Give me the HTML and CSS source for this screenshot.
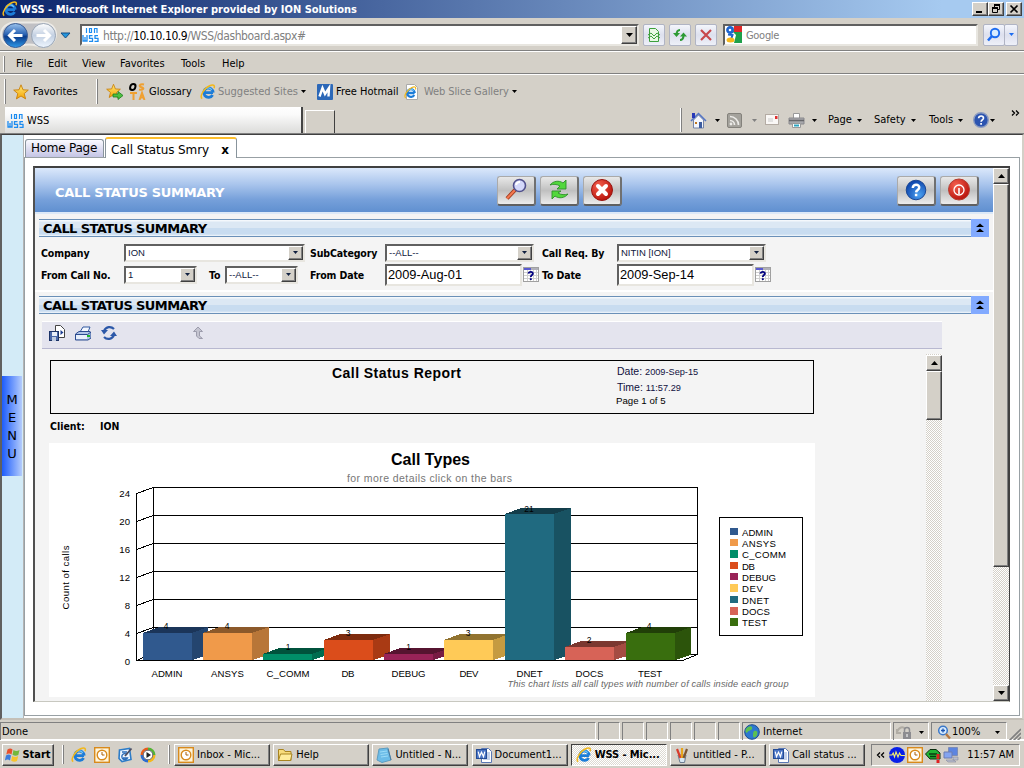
FILE: index.html
```html
<!DOCTYPE html>
<html lang="en">
<head>
<meta charset="utf-8">
<title>WSS - Microsoft Internet Explorer provided by ION Solutions</title>
<link rel="stylesheet" href="styles.css">
</head>
<body>
<svg class="defs" width="0" height="0">
  <defs>
    <linearGradient id="blueBall" x1="0" y1="0" x2="0" y2="1"><stop offset="0" stop-color="#9cc4ee"/><stop offset=".45" stop-color="#2a63b4"/><stop offset=".55" stop-color="#0a3c8c"/><stop offset="1" stop-color="#2f9bea"/></linearGradient>
    <linearGradient id="paleBall" x1="0" y1="0" x2="0" y2="1"><stop offset="0" stop-color="#fff"/><stop offset=".5" stop-color="#c3d0e2"/><stop offset="1" stop-color="#eef6ff"/></linearGradient>
    <linearGradient id="starFill" x1="0" y1="0" x2="0" y2="1"><stop offset="0" stop-color="#ffe97a"/><stop offset="1" stop-color="#f5a400"/></linearGradient>
    <radialGradient id="redBall" cx=".35" cy=".3" r=".8"><stop offset="0" stop-color="#f4604e"/><stop offset="1" stop-color="#b30c06"/></radialGradient>
    <radialGradient id="helpBall" cx=".65" cy=".75" r=".8"><stop offset="0" stop-color="#4aa0f0"/><stop offset="1" stop-color="#0a3fa8"/></radialGradient>
  </defs>
  <symbol id="ie" viewBox="0 0 16 16">
    <path d="M3.400 8.600h9.600M12.600 11A4.700 4.700 0 1 1 13.200 8.600" fill="none" stroke="#1c7cd8" stroke-width="2.800"/>
    <path d="M4.200 6.600A4.200 4.200 0 0 1 11.800 6" fill="none" stroke="#6cc4f8" stroke-width="1.300"/>
    <path d="M2.200 14.600C-.8 12.800 3.800 4.400 9.600 1.800c3.200-1.400 5.800-.8 4.400 2.400" fill="none" stroke="#f2b81c" stroke-width="1.500"/>
  </symbol>
  <symbol id="star" viewBox="0 0 16 16">
    <path d="M8 .8l2 5 5.300.3-4.100 3.500 1.400 5.300L8 12l-4.600 2.900 1.400-5.300L.7 6.100 6 5.800z" fill="url(#starFill)" stroke="#c87f0a" stroke-width=".9"/>
  </symbol>
  <symbol id="down" viewBox="0 0 5 3"><path d="M0 0h5L2.500 3z" fill="currentColor"/></symbol>
  <symbol id="clock" viewBox="0 0 16 16">
    <rect x=".7" y=".7" width="14.600" height="14.600" fill="#fff6dc" stroke="#d88a1c" stroke-width="1.400"/>
    <circle cx="8" cy="8" r="4.800" fill="#fff" stroke="#d88a1c" stroke-width="1.400"/>
    <path d="M8 5v3h2.500" fill="none" stroke="#a86008" stroke-width="1"/>
  </symbol>
  <symbol id="word" viewBox="0 0 16 16">
    <path d="M5.500 1.500h7l3 3v11h-10z" fill="#fff" stroke="#5a78b4"/>
    <path d="M9 6h5M9 8h5M7 10h7M7 12h7" stroke="#8aa4d6"/>
    <rect x=".5" y="2.500" width="10" height="9" fill="#4a74c4" stroke="#234a94"/>
    <path d="M2.200 4.600l1.300 5 2-4.400 2 4.400 1.300-5" fill="none" stroke="#fff" stroke-width="1.200"/>
  </symbol>
  <symbol id="calendar" viewBox="0 0 16 15">
    <rect x=".5" y=".5" width="15" height="14" fill="#fff" stroke="#a0a0a0"/>
    <path d="M1 5.500h14M1 8.500h14M1 11.500h14M4.500 3v11M7.500 3v11M10.500 3v11M13.500 3v11" stroke="#d0d0d0"/>
    <path d="M1 1h14v2H1z" fill="#b0b0b8"/><path d="M1 1h7v2H1z" fill="#5a5ad0"/>
    <path d="M5.500 6.700C5.800 4.200 10.200 4.200 9.800 6.800 9.500 8.200 7.800 8.200 7.800 10M7.800 11.200v1.900" fill="none" stroke="#000080" stroke-width="1.900"/>
  </symbol>
  <symbol id="chevrons" viewBox="0 0 18 18"><path d="M9 4.500l4 3.500H5zM9 9.500l4 3.500H5z" fill="#000"/></symbol>
  <symbol id="wssmark" viewBox="0 0 17 16">
    <path d="M4.500 1v5M7.500 1.500h2v4h-2zM12.500 6V1.500h2.500V6" fill="none" stroke="#1c8cf0" stroke-width="1.200"/>
    <path d="M1 8v6h4V8M3 10v4M10.500 8.700H7.500v2.600h3v3H7M16 8.700h-3v2.600h3v3h-3.500" fill="none" stroke="#1c8cf0" stroke-width="1.300"/>
  </symbol>
</svg>

<header class="titlebar">
  <svg class="i16"><use href="#ie"/></svg>
  <h1 class="title">WSS - Microsoft Internet Explorer provided by ION Solutions</h1>
  <div class="winbtns">
    <span class="raised wb"><svg width="12" height="10"><path d="M2 7h6v2H2z"/></svg></span>
    <span class="raised wb"><svg width="12" height="10"><path d="M4.500 3.500V1.500h5v4h-2" fill="none" stroke="#000"/><path d="M4 1h6M2 4h6" stroke="#000" stroke-width="2"/><path d="M2.500 4v4.500h5V4" fill="none" stroke="#000"/></svg></span>
    <span class="raised wb last"><svg width="12" height="10"><path d="M2.500 1.500l7 7m0-7l-7 7" stroke="#000" stroke-width="1.700"/></svg></span>
  </div>
</header>

<nav class="navbar">
  <svg class="travel" width="72" height="31" viewBox="0 0 72 31">
    <path d="M15 3.500h28c6 0 12 3 13 11 0 9-7 13-13 13-5 0-8-2-14-2s-8 2-14 2C6 27.500 1 22 1 15.500S7 3.500 15 3.500z" fill="#c0c0c4" stroke="#eceae6" stroke-width="2"/>
    <circle cx="15.500" cy="16.500" r="12" fill="url(#blueBall)" stroke="#3a5c94"/>
    <circle cx="43.500" cy="16.500" r="12" fill="url(#paleBall)" stroke="#98a4b4"/>
    <path d="M22.500 16.500H10M15 11l-5.500 5.500L15 22" fill="none" stroke="#fff" stroke-width="3"/>
    <path d="M36.500 16.500H49M44 11l5.500 5.500L44 22" fill="none" stroke="#fff" stroke-width="3"/>
    <path d="M61 14h9l-4.500 5z" fill="#2496dc" stroke="#174f86"/>
  </svg>
  <div class="field address">
    <svg width="17" height="16"><use href="#wssmark"/></svg>
    <span class="url">http://<b>10.10.10.9</b>/WSS/dashboard.aspx#</span>
    <span class="raised drop"><svg width="7" height="4" viewBox="0 0 7 4"><path d="M0 0h7L3.500 4z"/></svg></span>
  </div>
  <span class="softbtn"><svg class="i16" viewBox="0 0 16 16"><path d="M3.500 1.500h6l3 3v10h-9z" fill="#e8f8e4" stroke="#3ca03c"/><path d="M2 8l3-2 3 3 3-3 3 2M2 11l3-2 3 3 3-3 3 2" fill="none" stroke="#3ca03c"/></svg></span>
  <span class="softbtn"><svg class="i16" viewBox="0 0 16 16"><path d="M8 3c-2 0-3.500 1-3.500 5M8 13c2 0 3.500-1 3.500-5" fill="none" stroke="#2c9a34" stroke-width="2"/><path d="M1 6h7L4.500 10zM8 9.500h7l-3.500-4z" fill="#2c9a34"/></svg></span>
  <span class="softbtn"><svg class="i16" viewBox="0 0 16 16"><path d="M3 3l10 10M13 3L3 13" stroke="#c8484c" stroke-width="2.200"/></svg></span>
  <div class="field search">
    <svg width="17" height="17" viewBox="0 0 17 17"><path d="M7 0h10v17H7z" fill="#1fa04a"/><path d="M9 0h8v6H9z" fill="#e02828"/><path d="M0 0h9l-1 6 3 3-2 8H0z" fill="#fff"/><circle cx="5" cy="4" r="2.600" fill="none" stroke="#1c64d0" stroke-width="2.600"/><path d="M3 8.500l4.500.5-1 3" fill="none" stroke="#1c64d0" stroke-width="2"/><ellipse cx="5.500" cy="14" rx="4" ry="2.500" fill="#f6b81c"/></svg>
    <span>Google</span>
  </div>
  <span class="softbtn go"><svg class="i16" viewBox="0 0 16 16"><circle cx="9" cy="6" r="4.200" fill="#d8ecff" stroke="#1c6cf0" stroke-width="1.900"/><path d="M6 9l-4 4.500" stroke="#1c6cf0" stroke-width="2.600"/></svg></span>
  <span class="softbtn godrop"><svg width="5" height="3"><use href="#down"/></svg></span>
</nav>

<nav class="menubar">
  <span class="grip"></span><span>File</span><span>Edit</span><span>View</span><span>Favorites</span><span>Tools</span><span>Help</span>
</nav>

<div class="favbar">
  <span class="grip"></span>
  <svg class="i16"><use href="#star"/></svg><span>Favorites</span>
  <span class="grip tall"></span>
  <svg class="i17" viewBox="0 0 17 17"><use href="#star" width="15" height="16"/><path d="M7 11h5V8.500l5 4-5 4V14H7z" fill="#4cc040" stroke="#1c7c1c" stroke-width=".8"/></svg>
  <svg class="i17" viewBox="0 0 17 17"><ellipse cx="4.500" cy="4" rx="2.600" ry="3" transform="skewX(-10)" fill="none" stroke="#000" stroke-width="2"/><path d="M15 1.500c-4-1-6 2-2.500 2.700 3.500.8 1.500 3.300-2.500 2.400M1 10h7M4.500 10v7M10.500 17l2.500-7 2.500 7M11 14.500h4" fill="none" stroke="#f0a030" stroke-width="2"/></svg>
  <span>Glossary</span>
  <svg class="i16"><use href="#ie"/></svg><span class="dim">Suggested Sites</span>
  <svg class="arr" width="5" height="3"><use href="#down"/></svg>
  <svg class="i16" viewBox="0 0 16 16"><rect width="16" height="16" rx="1" fill="#2c68b8"/><path d="M2.500 12.500L5.500 4l2.500 6 4-6-.5 8.500" fill="none" stroke="#fff" stroke-width="2.400"/></svg>
  <span>Free Hotmail</span>
  <svg class="i16" viewBox="0 0 16 16"><path d="M2.500.5h8l3 3v12h-11z" fill="#fff" stroke="#aaa"/><use href="#ie" x="0" y="2" width="13" height="13"/></svg>
  <span class="dim slice">Web Slice Gallery</span>
  <svg class="arr" width="5" height="3"><use href="#down"/></svg>
</div>

<div class="tabsrow">
  <div class="btab"><svg width="17" height="16"><use href="#wssmark"/></svg><span>WSS</span></div>
  <div class="newtab"></div>
  <div class="cmds">
    <span class="grip"></span>
    <svg class="i17" viewBox="0 0 17 17"><path d="M3.500 8v8h10V8L8.500 3z" fill="#f4f6fc" stroke="#7484a8"/><path d="M1 9l7.500-7.500L16 9" fill="none" stroke="#5474c4" stroke-width="1.500"/><path d="M2 1h3v5H2z" fill="#2838b8"/><path d="M9 10h3v6H9z" fill="#3c5ca0"/><path d="M5 10h2v2H5z" fill="#c07820"/></svg>
    <svg class="arr" width="5" height="3"><use href="#down"/></svg>
    <svg class="i15" viewBox="0 0 15 15"><rect x=".5" y=".5" width="14" height="14" rx="1.500" fill="#a4a29c" stroke="#84827c"/><path d="M3 7.500a4.500 4.500 0 0 1 4.500 4.500M3 3.500a8.500 8.500 0 0 1 8.500 8.500" fill="none" stroke="#ecebe8" stroke-width="1.700"/><circle cx="4" cy="11" r="1.400" fill="#ecebe8"/></svg>
    <svg class="arr dim" width="5" height="3"><use href="#down"/></svg>
    <svg width="15" height="12" viewBox="0 0 15 12"><rect x=".5" y=".5" width="13" height="10" fill="#faf8f6" stroke="#b4aca4"/><rect x="10" y="2" width="2.500" height="3" fill="#e03030"/><path d="M3 5h5M3 7h5" stroke="#ccc"/></svg>
    <svg class="i17" viewBox="0 0 17 17"><path d="M5.500 1.500h6v5h-6z" fill="#fff" stroke="#999"/><path d="M1 6h15v6H1z" fill="#a8a8ac" stroke="#88888c"/><path d="M1 8.500h15" stroke="#66666a" stroke-width="1.500"/><path d="M4.500 11.500h8v4h-8z" fill="#fff" stroke="#999"/><path d="M6 13.500h5" stroke="#2ca4c0" stroke-width="2"/></svg>
    <svg class="arr" width="5" height="3"><use href="#down"/></svg>
    <span>Page</span><svg class="arr" width="5" height="3"><use href="#down"/></svg>
    <span>Safety</span><svg class="arr" width="5" height="3"><use href="#down"/></svg>
    <span>Tools</span><svg class="arr" width="5" height="3"><use href="#down"/></svg>
    <svg class="i16" viewBox="0 0 16 16"><circle cx="8" cy="8" r="7.300" fill="#2c54b0" stroke="#8c9cc0" stroke-width="1.400"/><path d="M5.600 6.200c.2-3.200 5.300-2.700 4.800.2C10 8 8.200 7.900 8.100 9.800M8.100 11v1.800" fill="none" stroke="#fff" stroke-width="1.700"/></svg>
    <svg class="arr" width="5" height="3"><use href="#down"/></svg>
    <svg class="more" width="9" height="6"><path d="M1 .5L3.500 3 1 5.500M5 .5L7.500 3 5 5.500" fill="none" stroke="#000" stroke-width="1.300"/></svg>
  </div>
</div>

<main class="viewport">
  <aside class="side"><div class="menu"><span>M</span><span>E</span><span>N</span><span>U</span></div></aside>
  <div class="page">
    <div class="ptabs">
      <div class="ptab">Home Page</div>
      <div class="ptab active"><span>Call Status Smry</span><b>x</b></div>
    </div>
    <div class="pbody">
      <div class="frame">
        <div class="doc">
          <div class="banner">
            <h2>CALL STATUS SUMMARY</h2>
            <div class="bgroup">
              <span class="metal"><svg width="26" height="26" viewBox="0 0 26 26"><path d="M12 13L4 21.500" stroke="#a03c20" stroke-width="4"/><path d="M12 13L4 21.500" stroke="#f47850" stroke-width="2"/><circle cx="16.500" cy="8.500" r="6" fill="#d4d8fa" stroke="#50508c" stroke-width="1.600"/><path d="M13 8a4 4 0 0 1 4-3" fill="none" stroke="#fff" stroke-width="2"/></svg></span>
              <span class="metal"><svg width="26" height="26" viewBox="0 0 26 26"><path d="M4 8c3-4 9-5 13-2l3-3v9h-9l3-3c-3-2-7-2-10-1zM22 17c-3 4-9 5-13 2l-3 3v-8h9l-3 2c3 2 7 2 10 1z" fill="#52d83c" stroke="#2c9028" stroke-width=".9"/></svg></span>
              <span class="metal"><svg width="26" height="26" viewBox="0 0 26 26"><circle cx="13" cy="13" r="10.500" fill="url(#redBall)" stroke="#981410"/><path d="M9 9l8 8M17 9l-8 8" stroke="#fff" stroke-width="4" stroke-linecap="round"/></svg></span>
            </div>
            <div class="bgroup right">
              <span class="metal"><svg width="26" height="26" viewBox="0 0 26 26"><circle cx="13" cy="13" r="9.800" fill="url(#helpBall)" stroke="#1c4894"/><path d="M9.800 11c0-4.600 7-4 6.400-.2-.4 2.400-3 2-3.100 4.600M13.100 16.800v2.400" fill="none" stroke="#fff" stroke-width="2.500"/></svg></span>
              <span class="metal"><svg width="26" height="26" viewBox="0 0 26 26"><circle cx="13" cy="12.500" r="10.500" fill="url(#redBall)" stroke="#b43c30"/><circle cx="13" cy="13" r="5" fill="none" stroke="#fff" stroke-width="1.300"/><path d="M13 11v6" stroke="#fff" stroke-width="1.600"/></svg></span>
            </div>
          </div>

          <section class="panel first">
            <div class="sechead"><h3>CALL STATUS SUMMARY</h3><svg width="18" height="18"><use href="#chevrons"/></svg></div>
            <div class="form">
              <label>Company</label>
              <div class="cell"><div class="field sel w181"><span>ION</span><i class="raised"><svg width="5" height="3"><use href="#down"/></svg></i></div></div>
              <label>SubCategory</label>
              <div class="cell"><div class="field sel w149"><span>--ALL--</span><i class="raised"><svg width="5" height="3"><use href="#down"/></svg></i></div></div>
              <label>Call Req. By</label>
              <div class="cell"><div class="field sel w149"><span>NITIN [ION]</span><i class="raised"><svg width="5" height="3"><use href="#down"/></svg></i></div></div>
              <label>From Call No.</label>
              <div class="cell"><div class="field sel w73"><span>1</span><i class="raised"><svg width="5" height="3"><use href="#down"/></svg></i></div><label class="to">To</label><div class="field sel w73"><span>--ALL--</span><i class="raised"><svg width="5" height="3"><use href="#down"/></svg></i></div></div>
              <label>From Date</label>
              <div class="cell"><div class="field date">2009-Aug-01</div><svg width="16" height="15"><use href="#calendar"/></svg></div>
              <label>To Date</label>
              <div class="cell"><div class="field date">2009-Sep-14</div><svg width="16" height="15"><use href="#calendar"/></svg></div>
            </div>
          </section>

          <section class="panel second">
            <div class="sechead"><h3>CALL STATUS SUMMARY</h3><svg width="18" height="18"><use href="#chevrons"/></svg></div>
            <div class="rtools">
              <svg class="i16" viewBox="0 0 16 16"><path d="M6.500.5h5l4 4v8h-9z" fill="#fff" stroke="#444"/><path d="M11.500 5l3 2.500-3 2.500z" fill="#1c3c90"/><rect x=".5" y="6.500" width="9" height="9" fill="#4a68a8" stroke="#1c3468"/><path d="M3 7h5v4H3z" fill="#e8eef8"/><path d="M3 12h4v4H3z" fill="#c0cce0"/></svg>
              <svg class="i16" viewBox="0 0 16 16"><path d="M5 7l3-5h7l-2 5z" fill="#f4f8ff" stroke="#3058a0"/><path d="M.5 9L4 6.500h11L16 8v5l-3 2H.5z" fill="#b0c4e8" stroke="#2c4c90"/><path d="M1 10h11v4H1z" fill="#e8f0fc"/><path d="M.5 9.500h12L16 7" fill="none" stroke="#2c4c90"/><rect x="12" y="10" width="3" height="2" fill="#1cb42c"/></svg>
              <svg class="i16" viewBox="0 0 16 16"><path d="M3 6C5 1.500 10 1 13 4M13 10c-2 4.500-7 5-10 2" fill="none" stroke="#2c58a8" stroke-width="2.200"/><path d="M0 5h7L3 9.500zM16 11H9l4-4.500z" fill="#2c58a8"/></svg>
              <svg class="i16" viewBox="0 0 16 16"><path d="M8 2l4.500 4.500h-3V11l3 2.500H9L6.500 11V6.500h-3z" fill="#c4c4d0" stroke="#9c9cac"/></svg>
            </div>
            <div class="rview">
              <div class="report">
                <div class="rhead">
                  <h4>Call Status Report</h4>
                  <div class="rmeta"><p>Date: <small>2009-Sep-15</small></p><p>Time: <small>11:57.29</small></p><p class="pg">Page 1 of 5</p></div>
                </div>
                <div class="client"><span>Client:</span><span>ION</span></div>
                <svg class="chart" viewBox="49 443 766 254" width="766" height="254">
                  <g class="grid">
                    <path d="M153.500 660V487.500H697.500V654.500M153.500 515.500h544M153.500 543.500h544M153.500 571.500h544M153.500 599.500h544M153.500 627.500h544"/>
                    <path d="M136.500 493v167.500H682.500L697.500 654.500H690M136.500 493.500l17-6M136.500 521.500l17-6M136.500 549.500l17-6M136.500 577.500l17-6M136.500 605.500l17-6M136.500 633.500l17-6"/>
                  </g>
                  <path d="M154 628h2v32h-19v-1l16-5z" fill="#fff"/>
                  <path class="grid" d="M136.500 660.500l7-3"/>
                  <g shape-rendering="crispEdges">
                    <g><path fill="#1b3559" d="M143 633l16-6h49l-16 6z"/><path fill="#24456f" d="M192 633l16-6v28l-16 5z"/><path fill="#30598e" d="M143 633h49v27h-49z"/></g>
                    <g><path fill="#8c592a" d="M203 633l16-6h50l-17 6z"/><path fill="#b87638" d="M252 633l17-6v28l-17 5z"/><path fill="#f09a4a" d="M203 633h49v27h-49z"/></g>
                    <g><path fill="#00523c" d="M263 654l16-6h49l-16 6z"/><path fill="#006d50" d="M312 654l16-6v7l-16 5z"/><path fill="#008e68" d="M263 654h49v6h-49z"/></g>
                    <g><path fill="#7d2b0e" d="M324 640l16-6h50l-17 6z"/><path fill="#a93a14" d="M373 640l17-6v21l-17 5z"/><path fill="#db4d1b" d="M324 640h49v20h-49z"/></g>
                    <g><path fill="#561430" d="M384 654l16-6h50l-17 6z"/><path fill="#771b43" d="M433 654l17-6v7l-17 5z"/><path fill="#992358" d="M384 654h49v6h-49z"/></g>
                    <g><path fill="#917330" d="M444 640l16-6h49l-16 6z"/><path fill="#c59b41" d="M493 640l16-6v21l-16 5z"/><path fill="#ffca57" d="M444 640h49v20h-49z"/></g>
                    <g><path fill="#133d4a" d="M505 514l16-6h50l-17 6z"/><path fill="#185262" d="M554 514l17-6v147l-17 5z"/><path fill="#206a80" d="M505 514h49v146h-49z"/></g>
                    <g><path fill="#7b3830" d="M565 647l16-6h50l-17 6z"/><path fill="#a54c42" d="M614 647l17-6v14l-17 5z"/><path fill="#d76357" d="M565 647h49v13h-49z"/></g>
                    <g><path fill="#213f08" d="M626 633l16-6h49l-16 6z"/><path fill="#2c540b" d="M675 633l16-6v28l-16 5z"/><path fill="#396e0e" d="M626 633h49v27h-49z"/></g>
                  </g>
                  <path class="base" d="M136 660.500h547"/>
                  <g class="lab" text-anchor="middle">
                    <text class="ctitle" x="430.500" y="465" textLength="79">Call Types</text>
                    <text class="csub" x="429.500" y="482" textLength="165">for more details click on the bars</text>
                    <text x="167" y="677" textLength="31">ADMIN</text><text x="227.500" y="677" textLength="33">ANSYS</text><text x="288" y="677" textLength="43">C_COMM</text><text x="348" y="677" textLength="13">DB</text><text x="408.500" y="677" textLength="34">DEBUG</text><text x="469" y="677" textLength="19">DEV</text><text x="529.500" y="677" textLength="26">DNET</text><text x="589.500" y="677" textLength="28">DOCS</text><text x="650" y="677" textLength="24">TEST</text>
                    <g class="vals"><text x="166" y="629">4</text><text x="227" y="629">4</text><text x="288" y="650">1</text><text x="348" y="636">3</text><text x="408.500" y="650">1</text><text x="468" y="636">3</text><text x="529" y="512">21</text><text x="589" y="643">2</text><text x="649" y="629">4</text></g>
                    <text transform="translate(69 577.500) rotate(-90)" textLength="64">Count of calls</text>
                    <text class="cnote" x="648" y="687" textLength="281">This chart lists all call types with number of calls inside each group</text>
                  </g>
                  <g class="lab" text-anchor="end"><text x="130" y="497">24</text><text x="130" y="525">20</text><text x="130" y="553">16</text><text x="130" y="581">12</text><text x="130" y="609">8</text><text x="130" y="637">4</text><text x="130" y="665">0</text></g>
                  <rect x="719.500" y="517.500" width="83" height="118" class="box"/>
                  <g class="lab">
                    <path fill="#30598e" d="M730 528h8v7h-8z"/><text x="742" y="536" textLength="31">ADMIN</text>
                    <path fill="#f09a4a" d="M730 539h8v7h-8z"/><text x="742" y="547" textLength="34">ANSYS</text>
                    <path fill="#008e68" d="M730 550h8v8h-8z"/><text x="742" y="558" textLength="44">C_COMM</text>
                    <path fill="#db4d1b" d="M730 562h8v7h-8z"/><text x="742" y="570" textLength="13">DB</text>
                    <path fill="#992358" d="M730 573h8v7h-8z"/><text x="742" y="581" textLength="34">DEBUG</text>
                    <path fill="#ffca57" d="M730 584h8v8h-8z"/><text x="742" y="592" textLength="21">DEV</text>
                    <path fill="#206a80" d="M730 596h8v7h-8z"/><text x="742" y="604" textLength="27">DNET</text>
                    <path fill="#d76357" d="M730 607h8v8h-8z"/><text x="742" y="615" textLength="28">DOCS</text>
                    <path fill="#396e0e" d="M730 618h8v8h-8z"/><text x="742" y="626" textLength="25">TEST</text>
                  </g>
                </svg>
              </div>
              <div class="scroll inner"><span class="raised sb"><svg width="7" height="4" viewBox="0 0 7 4"><path d="M0 4h7L3.500 0z"/></svg></span><span class="raised thumb"></span></div>
            </div>
          </section>
        </div>
        <div class="scroll outer"><span class="raised sb"><svg width="7" height="4" viewBox="0 0 7 4"><path d="M0 4h7L3.500 0z"/></svg></span><span class="raised thumb"></span><span class="track"></span><span class="raised sb"><svg width="7" height="4" viewBox="0 0 7 4"><path d="M0 0h7L3.500 4z"/></svg></span></div>
      </div>
    </div>
  </div>
</main>

<footer class="status">
  <span>Done</span><span></span><span></span><span></span><span></span><span></span><span></span>
  <span class="zone"><svg class="i16" viewBox="0 0 16 16"><circle cx="8" cy="8" r="7.300" fill="#2c78d0" stroke="#1c4c90"/><path d="M4 3c3-2 5 0 4 2s-4 1-5 4c-3-1-1-5 1-6zM10 7c3-1 4 1 3 4s-4 3-4 1 0-4 1-5z" fill="#5cc050"/></svg>Internet</span>
  <span class="lock"><svg class="i16" viewBox="0 0 16 16"><path d="M1 8c2-5 6-6 8-3M1 5v4h4" fill="none" stroke="#b0aca4" stroke-width="2"/><rect x="7" y="8" width="8" height="7" fill="#8c8c90"/><path d="M8.500 8V6a2.500 2.500 0 0 1 5 0v2" fill="none" stroke="#8c8c90" stroke-width="1.500"/><path d="M11 10v3" stroke="#fff"/></svg><svg class="arr" width="5" height="3"><use href="#down"/></svg></span>
  <span class="zoomp"><svg class="i15" viewBox="0 0 15 15"><circle cx="6" cy="5.500" r="4.300" fill="#d8ecff" stroke="#3c78c8" stroke-width="1.500"/><path d="M6 3.500v4M4 5.500h4" stroke="#1c54b0" stroke-width="1.300"/><path d="M9 9l4 4.500" stroke="#b87840" stroke-width="2.400"/></svg><em>100%</em><svg class="arr" width="5" height="3"><use href="#down"/></svg></span>
  <svg class="corner" width="12" height="13"><path d="M0 13L12 1M4 13l8-8M8 13l4-4" stroke="#808080" stroke-width="1.600"/></svg>
</footer>

<footer class="taskbar">
  <div class="raised start"><svg class="i16" viewBox="0 0 16 16"><path d="M2.500 2.500c2-1.300 3.500-1.300 5 0l-1 5c-1.700-1.200-3.300-1.200-5.200 0z" fill="#e8502c"/><path d="M8.500 3c2 1.200 3.800 1.200 6 0l-1.200 5c-2 1.200-3.800 1-5.800-.2z" fill="#74b83c"/><path d="M1 8.500c2-1.300 3.500-1.300 5 0l-1 5c-1.700-1.200-3.300-1.200-5.200 0z" fill="#3c7cdc"/><path d="M7.200 9c2 1.200 3.800 1.200 6 0l-1.200 5c-2 1.200-3.800 1-5.800-.2z" fill="#f8c42c"/></svg><b>Start</b></div>
  <span class="grip"></span>
  <div class="quick">
    <svg class="i16"><use href="#ie"/></svg><svg class="i16"><use href="#clock"/></svg>
    <svg class="i16" viewBox="0 0 16 16"><path d="M2.500 3l10-1.500 1.500 11-9 2-3-3z" fill="#eef6ff" stroke="#2c7cc8" stroke-width="1.600"/><path d="M5 5h5M10 7.500a3 3 0 1 0 .5 3.500H6" fill="none" stroke="#2c6cb8" stroke-width="1.400"/><path d="M8 9l6.500-7.500" stroke="#4c4c60" stroke-width="1.800"/></svg>
    <svg class="i16" viewBox="0 0 16 16"><path d="M8 .5A7.500 7.500 0 0 1 15.500 8H8z" fill="#54b434"/><path d="M.5 8A7.500 7.500 0 0 1 8 .5V8z" fill="#e85c1c"/><path d="M8 15.500A7.500 7.500 0 0 1 .5 8H8z" fill="#2c6cd0"/><path d="M15.500 8A7.500 7.500 0 0 1 8 15.500V8z" fill="#f4b81c"/><circle cx="8" cy="8" r="4.800" fill="#fff" stroke="#667"/><path d="M6.500 5l4.500 3-4.500 3z" fill="#222"/></svg>
  </div>
  <span class="grip"></span>
  <div class="tasks">
    <div class="raised task"><svg class="i16"><use href="#clock"/></svg><span>Inbox - Mic...</span></div>
    <div class="raised task"><svg class="i16" viewBox="0 0 16 16"><path d="M1.500 13.500v-11h5L8 4.500h6v9z" fill="#f8dc7c" stroke="#a88420"/><path d="M1.500 13.500L3.500 7H15l-1.500 6.500z" fill="#ffec9c" stroke="#a88420"/></svg><span>Help</span></div>
    <div class="raised task"><svg class="i16" viewBox="0 0 16 16"><path d="M3 2l9-1 3 12-9 2.500L1 13z" fill="#6cbce8" stroke="#5c9cc0"/><path d="M4 5l7-1M4.500 7.500l7-1M5 10l7-1" stroke="#9cdcf8"/><path d="M12 2l3 11" stroke="#48789c"/></svg><span>Untitled - N...</span></div>
    <div class="raised task"><svg class="i16"><use href="#word"/></svg><span>Document1...</span></div>
    <div class="task on"><svg class="i16"><use href="#ie"/></svg><span>WSS - Mic...</span></div>
    <div class="raised task"><svg class="i16" viewBox="0 0 16 16"><path d="M4 8h8l-1.500 7.500H6z" fill="#d8e8f4" stroke="#6c7c90"/><path d="M6.500 11L3 2" stroke="#d83c2c" stroke-width="2.200"/><path d="M8 11V1" stroke="#e8a41c" stroke-width="2.200"/><path d="M9.500 11L13 2" stroke="#7c5430" stroke-width="2.200"/></svg><span>untitled - P...</span></div>
    <div class="raised task"><svg class="i16"><use href="#word"/></svg><span>Call status ...</span></div>
  </div>
  <div class="tray">
    <svg width="9" height="6"><path d="M4 .5L1.500 3 4 5.500M8 .5L5.500 3 8 5.500" fill="none" stroke="#000" stroke-width="1.300"/></svg>
    <svg class="i16" viewBox="0 0 16 16"><circle cx="8" cy="8" r="8" fill="#0820e8"/><path d="M0 8h3l1.200-2 1.300 4 1.500-5 2 5 1.500-4L12 8.500h4" fill="none" stroke="#f4f06c" stroke-width="1.100"/></svg>
    <svg class="i16"><use href="#clock"/></svg>
    <svg class="i16" viewBox="0 0 16 16"><path d="M.5 7L5 2.500h6L15 6v6H5z" fill="#20b434" stroke="#082c0c"/><path d="M4 7h8M5 9.500h6" stroke="#083c10" stroke-width="1.600"/><path d="M11.500 7h3v5h-3zM11.500 13h3v3h-3z" fill="#e02020"/></svg>
    <svg class="i16" viewBox="0 0 16 16"><path d="M5.500.5h9v8h-9z" fill="#5c84e0" stroke="#7c8cb8"/><path d="M1 5h8v6H1z" fill="#84a4f0" stroke="#6c7cb0"/><path d="M3 13h8l2 2H5zM10 10h5v3h-5z" fill="#b8bccc" stroke="#888ca0" stroke-width=".6"/></svg>
    <span>11:57 AM</span>
  </div>
</footer>
</body>
</html>
```
FILE: styles.css
```css
* { box-sizing: border-box; }
body {
  margin: 0; width: 1024px; height: 768px; overflow: hidden;
  display: grid; grid-template-rows: 18px 33px 23px 32px 28px 586px 20px 28px;
  background: #d4d0c8; color: #000;
  font: 11px/14px "DejaVu Sans Condensed", Tahoma, "DejaVu Sans", sans-serif;
}
h1, h2, h3, h4, p { margin: 0; }
svg { display: block; flex: none; }
.defs { position: absolute; }
span { white-space: nowrap; }
.i15 { width: 15px; height: 15px; }
.i16 { width: 16px; height: 16px; }
.i17 { width: 17px; height: 17px; }
.dim { color: #808080; }
.raised {
  background: #d4d0c8; display: flex; align-items: center; justify-content: center;
  border: 1px solid; border-color: #fff #404040 #404040 #fff;
  box-shadow: inset -1px -1px #808080;
}
.field { background: #fff; border: 2px solid; border-color: #606060 #e8e6e0 #e8e6e0 #606060; display: flex; }
.grip { width: 2px; height: 16px; background: #fff; border-right: 1px solid #808080; }

.titlebar { display: flex; align-items: center; padding: 0 2px; background: linear-gradient(90deg, #0a246a, #a6caf0 92%); color: #fff; }
.title { font-size: 11px; font-weight: bold; margin: 1px 0 0 2px; flex: 1; white-space: nowrap; }
.winbtns { display: flex; }
.wb { width: 16px; height: 14px; }
.wb.last { margin-left: 2px; }

.navbar { display: flex; align-items: center; border-bottom: 1px solid #808080; padding-top: 1px; }
.travel { margin-right: 8px; }
.address { width: 559px; height: 22px; align-items: center; font-size: 12px; color: #808080; }
.url { flex: 1; margin: 2px 0 0 4px; letter-spacing: -.5px; word-spacing: 0; }
.url b { color: #000; font-weight: normal; }
.address .url { letter-spacing: -.42px; }
.drop { width: 16px; height: 18px; }
.softbtn {
  width: 22px; height: 22px; margin-left: 4px; border: 1px solid #b0b4c4; border-radius: 2px;
  background: linear-gradient(#f4f6fc, #dde0ee 50%, #eef0f8); display: flex; align-items: center; justify-content: center;
}
.search { width: 255px; height: 22px; margin-left: 6px; align-items: center; font-size: 11px; color: #808080; gap: 4px; }
.search span { padding-top: 2px; letter-spacing: -.3px; }
.go { margin-left: 5px; }
.godrop { margin-left: -1px; width: 14px; color: #1c6cf0; }

.menubar { padding-top: 2px; border-top: 1px solid #fff; border-bottom: 1px solid #808080; display: grid; align-items: center; grid-template-columns: 16px 32px 34px 38px 61px 41px 60px; }
.menubar .grip { margin-left: 3px; }

.favbar { padding-top: 2px; border-top: 1px solid #fff; display: grid; align-items: center; grid-template-columns: 13px 20px 63px 10px 23px 20px 51px 18px 83px 16px 19px 76px 12px 88px 10px; }
.favbar .grip { margin-left: 4px; height: 25px; }
.favbar .grip.tall { margin-left: 0; }
.favbar .i16:nth-last-child(3) { margin-left: -8px; }
.slice { letter-spacing: -.1px; }

.tabsrow { display: flex; border-bottom: 1px solid #808080; padding-top: 1px; }
.btab { width: 298px; margin-left: 5px; padding-top: 2px; display: flex; align-items: center; gap: 3px; padding-left: 2px; background: linear-gradient(#fff, #fafafa 30%, #dcdcda); border-right: 2px solid #444; }
.newtab { width: 30px; margin: 3px 0 0 2px; border: 1px solid #fff; border-right: 1px solid #404040; border-bottom: 0; }
.cmds { margin-left: 345px; display: grid; align-items: center; grid-template-columns: 10px 25px 12px 25px 13px 23px 24px 16px 29px 17px 37px 18px 29px 15px 17px 21px 10px; }
.cmds .grip { height: 24px; }
.cmds .more { margin-top: -14px; }

.viewport { display: flex; border: 1px solid #404040; border-width: 1px 2px 2px; border-color: #404040 #d4d0c8 #c4c0b8 #606060; background: #fff; }
.side { width: 22px; background: #d3ebf7; border-right: 1px solid #b4b4b4; padding-top: 241px; }
.menu {
  height: 100px; width: 20px; padding-top: 15px; font: 13px/18px "DejaVu Sans", sans-serif;
  display: flex; flex-direction: column; align-items: center; background: linear-gradient(90deg, #1c5cfc, #b4ccfc);
}
.page { flex: 1; padding-top: 2px; }
.ptabs { display: flex; height: 20px; align-items: flex-end; font: 12px/18px "DejaVu Sans", Verdana, sans-serif; }
.ptab { height: 18px; width: 79px; margin-left: 1px; padding-left: 5px; border: 1px solid #88949c; border-bottom: 0; border-radius: 3px 3px 0 0; background: linear-gradient(#fafaff, #c4c4e4); white-space: nowrap; letter-spacing: -.25px; line-height: 16px; }
.ptab.active { height: 21px; margin-bottom: -1px; width: 132px; background: #fff; border-top: 2px solid #fdbe2c; padding: 3px 7px 0 5px; letter-spacing: -.1px; display: flex; justify-content: space-between; }
.pbody { height: 559px; width: 996px; border: 1px solid #98a0a4; padding: 8px 8px; }
.frame { width: 977px; height: 536px; display: flex; border: 1px solid #404040; border-width: 2px 1px 1px 2px; border-color: #404040 #404040 #c8c8c0 #505050; background: #f4f4f4; overflow: hidden; }
.doc { width: 958px; }
.banner { height: 46px; display: flex; align-items: center; padding: 0 14px 0 20px; border-bottom: 2px solid #dce9f8; background: linear-gradient(#dbe8fb, #a8c4ec 38%, #76a0da 72%, #6090d0); }
.banner h2 { color: #fff; font: bold 13px/16px "DejaVu Sans", Verdana, sans-serif; width: 442px; padding-top: 5px; letter-spacing: -.3px; }
.bgroup { display: flex; gap: 4px; padding-top: 1px; }
.bgroup.right { margin-left: auto; }
.metal { width: 39px; height: 30px; border: 1px solid #888; border-width: 1px 2px 2px 1px; border-color: #aaa #707070 #606060 #aaa; border-radius: 3px; display: flex; align-items: center; justify-content: center; background: linear-gradient(#e8e8e8, #c0c0c0 50%, #ececec); }
.panel { padding: 5px 4px 0; }
.panel.first { height: 78px; border-bottom: 2px solid #fff; }
.panel.second { padding-top: 4px; }
.sechead { height: 18px; display: flex; background: #82aaff; }
.sechead h3 { width: 932px; border: solid #6a90b8; border-width: 1px 0; padding-left: 4px; font: bold 13px/17px "DejaVu Sans", Verdana, sans-serif; letter-spacing: -.6px; background: linear-gradient(#f4f8fc 0 1px, #dce8f4 2px, #dce8f4 50%, #c8dcf0 50%, #c8dcf0 88%, #f4f8fc); }
.form { display: grid; grid-template-columns: 83px 186px 75px 157px 75px 160px; grid-template-rows: 21px 23px; padding: 5px 0 0 2px; align-items: center; font-size: 10.500px; font-weight: bold; white-space: nowrap; }
.form label { letter-spacing: -.12px; }
.cell { display: flex; align-items: center; }
.sel { height: 18px; font: 9.500px/13px "Liberation Sans", Arial, sans-serif; padding-left: 2px; color: #102040; }
.sel span { flex: 1; }
.sel i { width: 15px; height: 14px; }
.w181 { width: 181px; } .w149 { width: 149px; } .w73 { width: 73px; }
.to { width: 28px; padding-left: 12px; }
.date { width: 137px; height: 22px; margin-right: 1px; padding-left: 1px; font: 12.800px/18px "Liberation Sans", Arial, sans-serif; }

.rtools { margin: 7px 0 0 3px; width: 900px; height: 28px; background: #e4e4ee; border-top: 1px solid #fff; border-bottom: 1px solid #b8b8d0; display: grid; grid-template-columns: 26px 26px 89px 16px; align-items: center; padding: 0 0 4px 7px; }
.rview { display: flex; margin: 5px 0 0 3px; height: 348px; width: 900px; }
.report { width: 884px; padding: 6px 0 0 7px; }
.rhead { margin-left: 1px; width: 764px; height: 54px; border: 1px solid #000; display: flex; }
.rhead h4 { width: 566px; padding-left: 281px; padding-top: 3px; font: bold 14px/18px "Liberation Sans", Arial, sans-serif; letter-spacing: .45px; white-space: nowrap; }
.rmeta { padding-top: 2px; font: 10.500px/16px "Liberation Sans", Arial, sans-serif; color: #101040; white-space: nowrap; }
.rmeta small { font-size: 9.200px; }
.rmeta p { height: 16px; margin-bottom: -.5px; }
.rmeta .pg { font-size: 9.700px; line-height: 13px; color: #000; margin-left: -1px; }
.client { margin-left: 1px; height: 29px; padding-top: 5px; display: grid; grid-template-columns: 50px 50px; font-weight: bold; font-size: 10.500px; }
.chart { background: #fff; }
.grid, .base, .box { fill: none; stroke: #000; shape-rendering: crispEdges; }
.lab { font: 9.600px "Liberation Sans", Arial, sans-serif; }
.vals { font-size: 8.500px; }
.ctitle { font-size: 16px; font-weight: bold; }
.csub { font-size: 10.500px; fill: #777; }
.cnote { font-size: 9.200px; font-style: italic; fill: #666; }

.scroll { width: 16px; display: flex; flex-direction: column; background: repeating-conic-gradient(#fff 0 25%, #d4d0c8 0 50%) 0 0 / 2px 2px; }
.sb { height: 16px; flex: none; }
.inner { padding-top: 1px; }
.inner .thumb { height: 49px; }
.outer .thumb { height: 383px; }
.outer .track { flex: 1; }

.status { display: grid; grid-template-columns: 598px repeat(6, 24px) 151px 38px 78px 12px; padding-top: 2px; border-bottom: 1px solid #fff; }
.status span { border: 1px solid; border-color: #808080 #fff #fff #808080; margin-right: 2px; padding: 1px 0 0 1px; display: flex; align-items: center; }
.status .zone { gap: 3px; }
.status .lock { gap: 7px; padding-left: 2px; }
.status .zoomp { padding-left: 5px; }
.zoomp em { font-style: normal; width: 43px; }
.corner { align-self: end; }

.taskbar { display: flex; align-items: center; border-top: 1px solid #fff; }
.start { width: 52px; height: 22px; margin-left: 2px; margin-right: 8px; gap: 1px; }
.start b { font-size: 11px; }
.taskbar .grip { height: 19px; }
.quick { display: flex; gap: 7px; margin: 0 12px 0 7px; }
.taskbar .grip + .quick + .grip { margin-right: 4px; }
.tasks { display: grid; grid-template-columns: repeat(7, 96px); gap: 3.200px; }
.task { height: 22px; display: flex; align-items: center; justify-content: flex-start; gap: 3px; padding-left: 3px; overflow: hidden; }
.task span, .start b, .tray span { padding-top: 1px; }
.task.on { border: 1px solid; border-color: #404040 #fff #fff #404040; font-weight: bold; background: repeating-conic-gradient(#fff 0 25%, #dcd9d2 0 50%) 0 0 / 2px 2px; padding-left: 4px; letter-spacing: -.1px; }
.tray { margin-left: 6px; width: 149px; height: 22px; border: 1px solid; border-color: #808080 #fff #fff #808080; display: grid; grid-template-columns: 13px 18px 18px 18px 24px 50px; align-items: center; padding-left: 4px; }
```
